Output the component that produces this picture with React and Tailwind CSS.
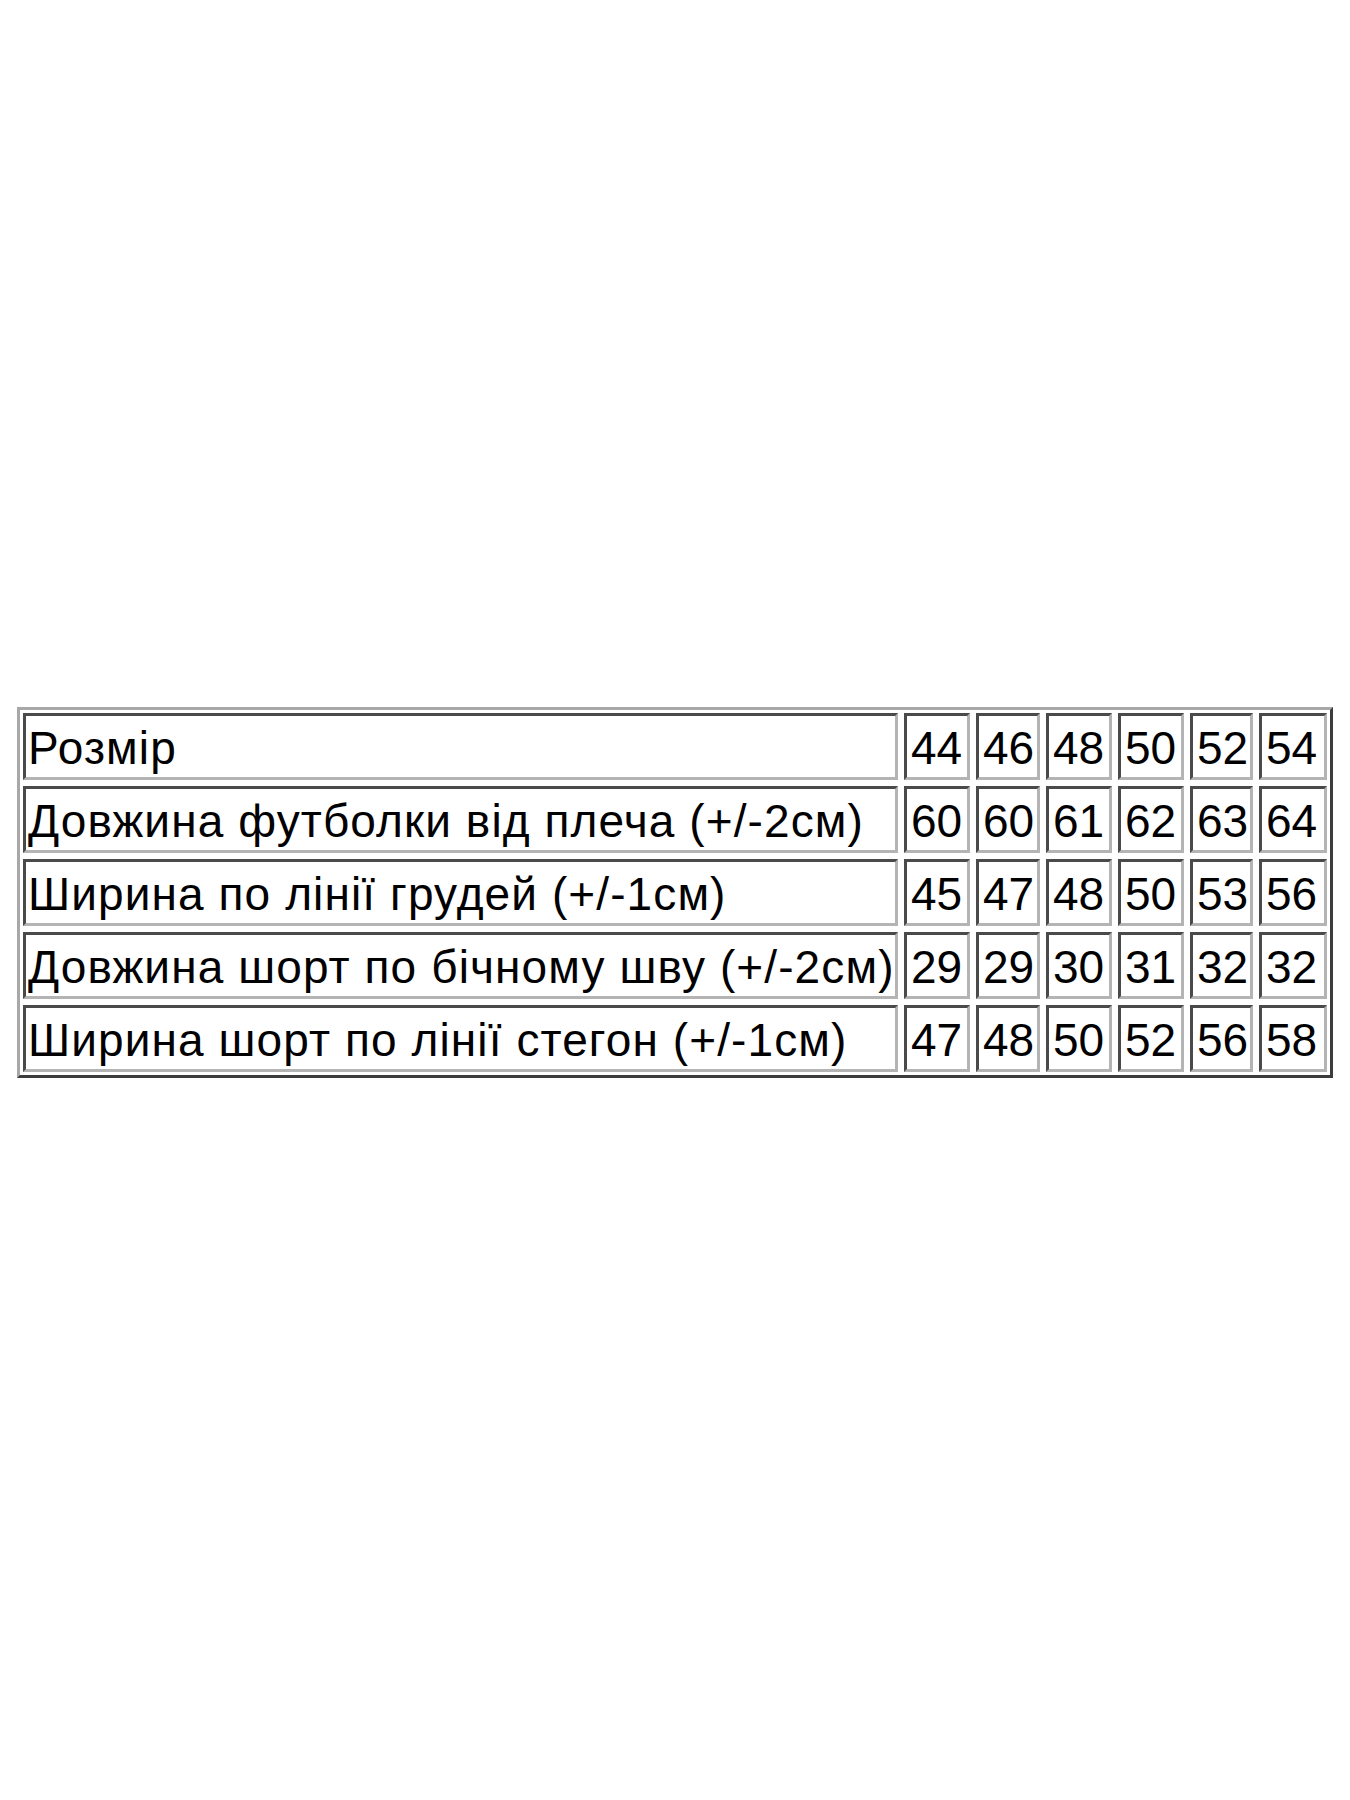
export default function App() {
  const rows = [
    ["Розмір", ["44", "46", "48", "50", "52", "54"]],
    ["Довжина футболки від плеча (+/-2см)", ["60", "60", "61", "62", "63", "64"]],
    ["Ширина по лінії грудей (+/-1см)", ["45", "47", "48", "50", "53", "56"]],
    ["Довжина шорт по бічному шву (+/-2см)", ["29", "29", "30", "31", "32", "32"]],
    ["Ширина шорт по лінії стегон (+/-1см)", ["47", "48", "50", "52", "56", "58"]],
  ];
  const cell =
    "h-[67px] flex items-center pt-[3px] bg-white border-[3px] border-t-[#4a4a4a] border-l-[#4a4a4a] border-b-[#b4b4b4] border-r-[#b4b4b4] overflow-hidden whitespace-nowrap";
  return (
    <div className="w-[1350px] h-[1800px] bg-white pt-[707px] pl-[17px]" style={{ fontFamily: '"Liberation Sans", Arial, sans-serif' }}>
      <div className="w-[1316px] p-[3px] border-[3px] border-t-[#a8a8a8] border-l-[#a8a8a8] border-b-[#3c3c3c] border-r-[#3c3c3c] bg-white grid grid-cols-[875px_66px_64px_66px_66px_63px_68px] gap-[6px] text-[46px] leading-none text-black">
        {rows.map(([label, vals]) => (
          <>
            <div key={label} className={cell + " pl-[2px] tracking-[1.1px]"}>{label}</div>
            {vals.map((v, i) => (
              <div key={label + i} className={cell + " pl-[4px]"}>{v}</div>
            ))}
          </>
        ))}
      </div>
    </div>
  );
}
